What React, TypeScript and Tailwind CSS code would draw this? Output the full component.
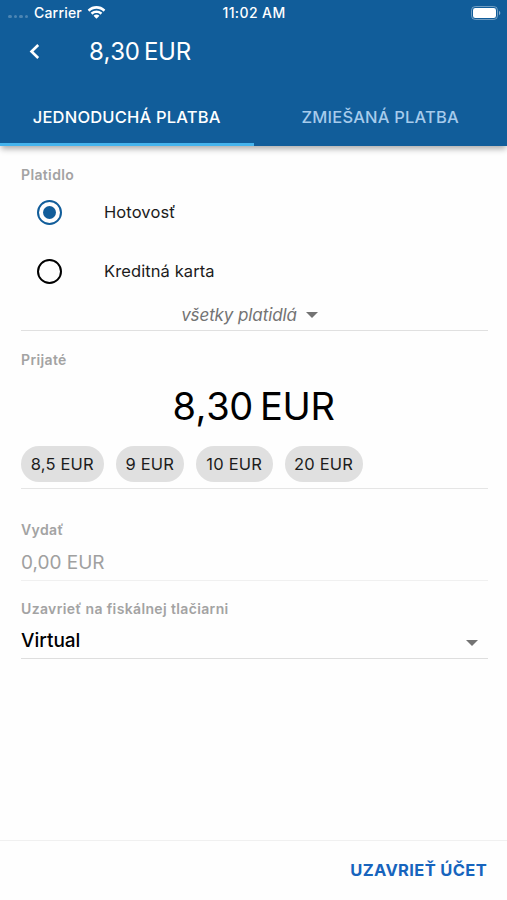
import { useState } from "react";
import clsx from "clsx";

type Method = { id: string; label: string };

const METHODS: Method[] = [
  { id: "cash", label: "Hotovosť" },
  { id: "card", label: "Kreditná karta" },
];

const AMOUNTS = [
  { label: "8,5 EUR", width: "w-[82.5px]" },
  { label: "9 EUR", width: "w-[68.5px]" },
  { label: "10 EUR", width: "w-[76.5px]" },
  { label: "20 EUR", width: "w-[78px]" },
];

const TABS = [
  { id: "simple", label: "JEDNODUCHÁ PLATBA" },
  { id: "mixed", label: "ZMIEŠANÁ PLATBA" },
];

function Caret() {
  return (
    <svg width="12" height="6" viewBox="0 0 12 6" className="fill-[#737373]">
      <path d="M0 0h12L6 6z" />
    </svg>
  );
}

function FieldLabel({ children }: { children: string }) {
  return (
    <h2 className="text-[14px] leading-[18px] font-[560] tracking-[0.36px] text-[#a3a3a3]">{children}</h2>
  );
}

function StatusBar() {
  return (
    <div className="flex h-[26px] items-center pr-[6px] pb-px pl-2 text-[14px] font-medium">
      <div className="flex flex-1 items-center">
        <div className="mt-2 flex w-[26px] gap-[2px]">
          {[0, 1, 2, 3].map((i) => (
            <span key={i} className="size-[3.5px] rounded-full bg-white/25" />
          ))}
        </div>
        <span className="tracking-[0.2px]">Carrier</span>
        <svg width="19" height="14" viewBox="0 0 19 14" className="ml-[5.5px] fill-white">
          <path d="M9.5 2.7c2.6 0 5 1 6.8 2.7.1.1.3.1.5 0l1.3-1.4c.1-.1.1-.4 0-.5C13.3-1.1 5.7-1.1.9 3.5c-.1.1-.1.4 0 .5l1.3 1.4c.2.1.4.1.5 0C4.5 3.7 6.9 2.7 9.5 2.7z" />
          <path d="M9.5 7.1c1.4 0 2.7.5 3.7 1.4.2.2.4.2.5 0l1.4-1.4c.1-.2.1-.4 0-.5-3.200-2.900-8-2.900-11.200 0-.1.1-.1.3 0 .5l1.4 1.4c.1.2.3.2.5 0 1-.9 2.300-1.400 3.700-1.400z" />
          <path d="M12.200 10c.1-.1.1-.4 0-.5-1.600-1.300-3.800-1.300-5.400 0-.1.1-.1.4 0 .5l2.400 2.400c.2.2.4.2.6 0z" />
        </svg>
      </div>
      <span className="pr-px tracking-[0.4px]">11:02 AM</span>
      <div className="flex flex-1 justify-end">
        <svg width="30" height="14" viewBox="0 0 30 14">
          <rect x="0.5" y="0.5" width="26" height="13" rx="3.8" fill="none" stroke="white" strokeOpacity="0.4" />
          <rect x="2" y="2" width="23" height="10" rx="2.3" fill="white" />
          <path d="M28 4.8c1.800.7 1.800 3.700 0 4.400z" fill="white" fillOpacity="0.5" />
        </svg>
      </div>
    </div>
  );
}

export default function App() {
  const [tab, setTab] = useState("simple");
  const [method, setMethod] = useState("cash");
  const [received, setReceived] = useState("8,30 EUR");

  return (
    <div className="flex h-[900px] w-[507px] flex-col overflow-hidden bg-[#fefefe] font-['Inter',sans-serif] text-[#1c1c1c]">
      <header className="h-[146px] shrink-0 bg-[#115d9a] text-white shadow-[0_4px_6px_-1px_rgba(0,0,0,0.32)]">
        <StatusBar />
        <div className="flex h-[51px] items-center pl-[29px]">
          <button type="button" aria-label="Späť" className="flex w-[60px]">
            <svg width="11" height="15" viewBox="0 0 11 15" className="fill-none stroke-white stroke-[2.6]">
              <path d="M9.200 1 2.500 7.500l6.700 6.500" />
            </svg>
          </button>
          <h1 className="text-[24px] leading-none tracking-[-0.3px] [font-kerning:none] [word-spacing:-2px]">8,30 EUR</h1>
        </div>
        <nav className="flex h-[69px]">
          {TABS.map((t) => (
            <button
              key={t.id}
              type="button"
              onClick={() => setTab(t.id)}
              className={clsx(
                "flex-1 border-b-[3px] pt-[14px] text-[16.5px] font-medium tracking-[0.2px]",
                tab === t.id ? "border-[#45b4ee] text-white" : "border-transparent text-[#a6cbec]",
              )}
            >
              {t.label}
            </button>
          ))}
        </nav>
      </header>

      <main className="flex-1 pr-[19px] pl-[21px]">
        <section className="h-[185px] border-b border-[#e0e0e0] pt-5">
          <FieldLabel>Platidlo</FieldLabel>
          <div>
            {METHODS.map((m) => (
              <button
                key={m.id}
                type="button"
                role="radio"
                aria-checked={method === m.id}
                onClick={() => setMethod(m.id)}
                className="flex h-[59px] w-full items-center pb-[3px] pl-4 text-left text-[16.5px] tracking-[0.1px]"
              >
                <span
                  className={clsx(
                    "mr-[42px] flex size-[25px] items-center justify-center rounded-full border-[2.5px]",
                    method === m.id ? "border-[#115d9a]" : "border-black",
                  )}
                >
                  {method === m.id && <span className="size-[13px] rounded-full bg-[#115d9a]" />}
                </span>
                {m.label}
              </button>
            ))}
          </div>
          <button
            type="button"
            className="mx-auto mt-[2px] flex items-center gap-[9px] pr-[10px] text-[17px] leading-[22px] text-[#737373]"
          >
            <span className="font-[450] tracking-[-0.1px] italic">všetky platidlá</span>
            <Caret />
          </button>
        </section>

        <section className="h-[158px] border-b border-[#e5e5e5] pt-5">
          <FieldLabel>Prijaté</FieldLabel>
          <p className="mt-[13px] pr-[2px] text-center text-[38px] leading-[48px] tracking-[-0.4px] text-black [font-kerning:none] [word-spacing:-3px]">
            {received}
          </p>
          <div className="mt-4 flex gap-3">
            {AMOUNTS.map((a) => (
              <button
                key={a.label}
                type="button"
                onClick={() => setReceived(a.label)}
                className={clsx(
                  "h-9 shrink-0 rounded-full bg-[#e0e0e0] text-[16.5px] tracking-[0.2px] whitespace-nowrap",
                  a.width,
                )}
              >
                {a.label}
              </button>
            ))}
          </div>
        </section>

        <section className="h-[92px] border-b border-[#f0f0f0] pt-8">
          <FieldLabel>Vydať</FieldLabel>
          <p className="mt-3 text-[19px] leading-6 text-[#a0a0a0]">0,00 EUR</p>
        </section>

        <section className="h-[77.5px] border-b-[1.5px] border-[#dedede] pt-[19px]">
          <FieldLabel>Uzavrieť na fiskálnej tlačiarni</FieldLabel>
          <button
            type="button"
            className="mt-[11px] flex w-full items-center justify-between pr-[10px] text-[19px] leading-6 font-medium text-black"
          >
            Virtual
            <span className="mt-[3px]">
              <Caret />
            </span>
          </button>
        </section>
      </main>

      <footer className="flex h-[60px] shrink-0 items-center justify-end border-t border-[#f0f0f0] pr-5">
        <button type="button" className="text-[16.5px] font-[650] tracking-[0.35px] text-[#1764bd]">
          UZAVRIEŤ ÚČET
        </button>
      </footer>
    </div>
  );
}
